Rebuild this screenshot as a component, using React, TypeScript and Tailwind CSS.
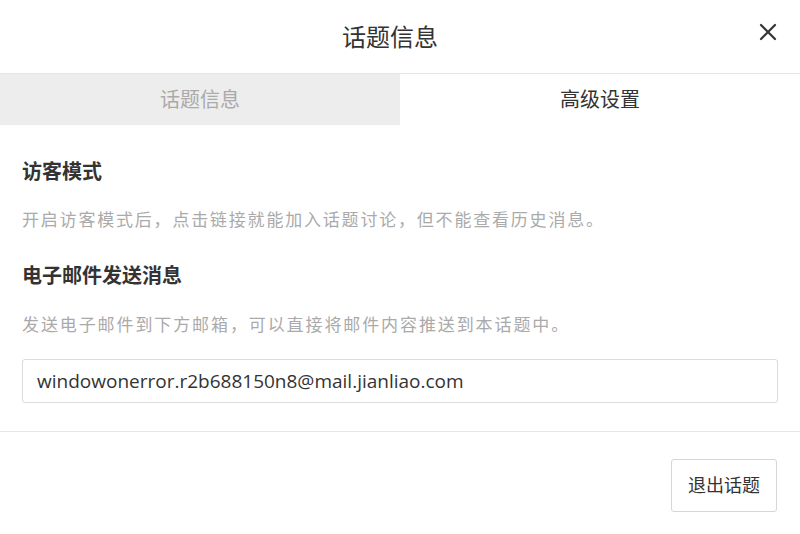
import React, { useState } from 'react';

const App: React.FC = () => {
  const [tab, setTab] = useState<'info' | 'advanced'>('advanced');
  const email = 'windowonerror.r2b688150n8@mail.jianliao.com';

  return (
    <div
      className="w-[800px] h-[534px] bg-white text-[#333] overflow-hidden"
      style={{ fontFamily: '"Open Sans", "Noto Sans CJK SC", sans-serif' }}
    >
      {/* header */}
      <div className="relative h-[73px] flex items-center justify-center pr-[20px]">
        <h1 className="text-[24px] leading-none text-[#333] font-normal">话题信息</h1>
        <button className="absolute right-[22px] top-[22px] w-[20px] h-[20px] flex items-center justify-center text-[#333]">
          <svg width="18" height="18" viewBox="0 0 18 18" fill="none" stroke="currentColor" strokeWidth="2.2" strokeLinecap="round">
            <path d="M2 2 L16 16 M16 2 L2 16" />
          </svg>
        </button>
      </div>

      {/* tabs */}
      <div className="grid grid-cols-2 h-[52px] border-t border-[#e6e6e6]">
        <button
          onClick={() => setTab('info')}
          className={
            tab === 'info'
              ? 'bg-white text-[#333] text-[20px]'
              : 'bg-[#ededed] text-[#aaa] text-[20px]'
          }
        >
          话题信息
        </button>
        <button
          onClick={() => setTab('advanced')}
          className={
            tab === 'advanced'
              ? 'bg-white text-[#333] text-[20px]'
              : 'bg-[#ededed] text-[#aaa] text-[20px]'
          }
        >
          高级设置
        </button>
      </div>

      {/* body */}
      <div className="px-[22px] pt-[33px] pb-[28px]">
        <h2 className="text-[20px] leading-[28px] font-bold text-[#333]">访客模式</h2>
        <p className="mt-[20px] text-[17px] leading-[28px] tracking-[1.8px] text-[#aaa]">
          开启访客模式后，点击链接就能加入话题讨论，但不能查看历史消息。
        </p>
        <h2 className="mt-[28px] text-[20px] leading-[28px] font-bold text-[#333]">电子邮件发送消息</h2>
        <p className="mt-[21px] text-[17px] leading-[28px] tracking-[1.9px] text-[#aaa]">
          发送电子邮件到下方邮箱，可以直接将邮件内容推送到本话题中。
        </p>
        <input
          readOnly
          value={email}
          className="mt-[20px] w-full h-[44px] px-[14px] border border-[#dcdcdc] rounded-[3px] text-[19px] text-[#333] outline-none"
          style={{ fontFamily: '"Open Sans", sans-serif' }}
        />
      </div>

      {/* footer */}
      <div className="border-t border-[#e6e6e6] flex justify-end pt-[27px] pr-[23px]">
        <button className="w-[106px] h-[53px] border border-[#d6d6d6] rounded-[3px] text-[18px] text-[#333] bg-white">
          退出话题
        </button>
      </div>
    </div>
  );
};

export default App;
